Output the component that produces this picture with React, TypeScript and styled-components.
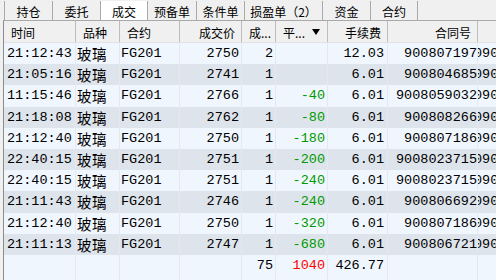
import React from "react";
import styled, { createGlobalStyle, css } from "styled-components";

const Global = createGlobalStyle`
  html, body { margin: 0; padding: 0; background: #f0f0f0; overflow: hidden; }
  body { width: 496px; height: 280px; }
`;

const Root = styled.div`
  width: 496px;
  height: 280px;
  overflow: hidden;
  background: #f0f0f0;
  display: flex;
  flex-direction: column;
`;

const TabBar = styled.div`
  height: 20px;
  display: flex;
  padding-left: 4px;
  box-sizing: border-box;
`;

const Tab = styled.div<{ $w: number; $active?: boolean; $last?: boolean }>`
  width: ${(p) => p.$w}px;
  box-sizing: border-box;
  border-left: 1px solid #a9a9a9;
  ${(p) => p.$last && css`border-right: 1px solid #a9a9a9;`}
  margin-top: 1px;
  display: flex;
  align-items: center;
  justify-content: center;
  padding-top: 2px;
  font-family: "Noto Sans CJK SC", sans-serif;
  font-size: 12px;
  color: #000;
  background: ${(p) => (p.$active ? "#ffffff" : "#f0f0f0")};
  white-space: nowrap;
`;

const Table = styled.div`
  margin-left: 3px;
  border-left: 1px solid #8c8c8c;
  border-top: 1px solid #a9a9a9;
  flex: 1;
  background: #f0f6fd;
  display: flex;
  flex-direction: column;
`;

const COLS = [72, 44, 60, 62, 34, 52, 60, 90, 120];
const gridCols = COLS.map((w) => `${w}px`).join(" ");

const HeaderRow = styled.div`
  display: grid;
  grid-template-columns: ${gridCols};
  height: 21px;
  background: #f0f0f0;
  border-bottom: 1px solid #e2e2e2;
`;

const HeaderCell = styled.div<{ $align: "left" | "right" }>`
  box-sizing: border-box;
  border-right: 1px solid #bdbdbd;
  display: flex;
  align-items: center;
  justify-content: ${(p) => (p.$align === "right" ? "flex-end" : "flex-start")};
  padding: 1px 6px 0 7px;
  font-family: "Noto Sans CJK SC", sans-serif;
  font-size: 12px;
  color: #000;
  white-space: nowrap;
  overflow: hidden;
`;

const SortArrow = styled.svg`
  margin-left: auto;
  margin-right: 1px;
  flex: none;
`;

const Row = styled.div<{ $shade?: boolean }>`
  display: grid;
  grid-template-columns: ${gridCols};
  height: 21.2px;
  background: ${(p) => (p.$shade ? "#dee4eb" : "#f0f6fd")};
`;

const Cell = styled.div<{ $align: "left" | "right"; $pad?: number }>`
  box-sizing: border-box;
  border-right: 1px solid #e4e9ef;
  display: flex;
  align-items: center;
  justify-content: ${(p) => (p.$align === "right" ? "flex-end" : "flex-start")};
  padding: 0 ${(p) => (p.$align === "right" ? p.$pad ?? 2 : 0)}px 0
    ${(p) => (p.$align === "left" ? p.$pad ?? 2 : 0)}px;
  font-family: "Liberation Mono", "Noto Sans CJK SC", monospace;
  font-size: 13.5px;
  color: #000;
  white-space: nowrap;
  overflow: hidden;
`;

const KindText = styled.span`
  font-family: "Noto Sans CJK SC", sans-serif;
  font-size: 14.5px;
  letter-spacing: 0.5px;
`;

const Profit = styled.span<{ $tone: "loss" | "gain" }>`
  color: ${(p) => (p.$tone === "loss" ? "#009a00" : "#ff0000")};
`;

const Overflow = styled.span`
  margin-left: -4px;
`;

const tabs = [
  { label: "持仓", w: 48 },
  { label: "委托", w: 48 },
  { label: "成交", w: 47, active: true },
  { label: "预备单", w: 49 },
  { label: "条件单", w: 48 },
  { label: "损盈单（2）", w: 78 },
  { label: "资金", w: 48 },
  { label: "合约", w: 48 },
];

type Trade = {
  time: string;
  price: number;
  qty: number;
  pl: number | null;
  fee: string;
  no: string;
};

const trades: Trade[] = [
  { time: "21:12:43", price: 2750, qty: 2, pl: null, fee: "12.03", no: "900807197" },
  { time: "21:05:16", price: 2741, qty: 1, pl: null, fee: "6.01", no: "900804685" },
  { time: "11:15:46", price: 2766, qty: 1, pl: -40, fee: "6.01", no: "9008059032" },
  { time: "21:18:08", price: 2762, qty: 1, pl: -80, fee: "6.01", no: "900808266" },
  { time: "21:12:40", price: 2750, qty: 1, pl: -180, fee: "6.01", no: "900807186" },
  { time: "22:40:15", price: 2751, qty: 1, pl: -200, fee: "6.01", no: "9008023715" },
  { time: "22:40:15", price: 2751, qty: 1, pl: -240, fee: "6.01", no: "9008023715" },
  { time: "21:11:43", price: 2746, qty: 1, pl: -240, fee: "6.01", no: "900806692" },
  { time: "21:12:40", price: 2750, qty: 1, pl: -320, fee: "6.01", no: "900807186" },
  { time: "21:11:13", price: 2747, qty: 1, pl: -680, fee: "6.01", no: "900806721" },
];

export default function App() {
  return (
    <Root>
      <Global />
      <TabBar>
        {tabs.map((t, i) => (
          <Tab key={t.label} $w={t.w} $active={t.active} $last={i === tabs.length - 1}>
            {t.label}
          </Tab>
        ))}
      </TabBar>
      <Table>
        <HeaderRow>
          <HeaderCell $align="left">时间</HeaderCell>
          <HeaderCell $align="left">品种</HeaderCell>
          <HeaderCell $align="left">合约</HeaderCell>
          <HeaderCell $align="right">成交价</HeaderCell>
          <HeaderCell $align="left">成...</HeaderCell>
          <HeaderCell $align="left">
            平...
            <SortArrow width="8" height="7" viewBox="0 0 8 7">
              <path d="M0 0 H8 L4 6 Z" fill="#000" />
            </SortArrow>
          </HeaderCell>
          <HeaderCell $align="right">手续费</HeaderCell>
          <HeaderCell $align="right">合同号</HeaderCell>
          <HeaderCell $align="left" />
        </HeaderRow>
        {trades.map((t, i) => (
          <Row key={i} $shade={i % 2 === 1}>
            <Cell $align="left" $pad={3}>{t.time}</Cell>
            <Cell $align="left" $pad={1}>
              <KindText>玻璃</KindText>
            </Cell>
            <Cell $align="left" $pad={1}>FG201</Cell>
            <Cell $align="right">{t.price}</Cell>
            <Cell $align="right">{t.qty}</Cell>
            <Cell $align="right">
              {t.pl !== null && <Profit $tone="loss">{t.pl}</Profit>}
            </Cell>
            <Cell $align="right" $pad={3}>{t.fee}</Cell>
            <Cell $align="right" $pad={0}>{t.no}</Cell>
            <Cell $align="left" $pad={0}>
              <Overflow>090</Overflow>
            </Cell>
          </Row>
        ))}
        <Row>
          <Cell $align="left" />
          <Cell $align="left" />
          <Cell $align="left" />
          <Cell $align="right" />
          <Cell $align="right">75</Cell>
          <Cell $align="right">
            <Profit $tone="gain">1040</Profit>
          </Cell>
          <Cell $align="right" $pad={3}>426.77</Cell>
          <Cell $align="right" />
          <Cell $align="left" />
        </Row>
        <Row>
          {COLS.map((_, i) => (
            <Cell key={i} $align="left" />
          ))}
        </Row>
      </Table>
    </Root>
  );
}
